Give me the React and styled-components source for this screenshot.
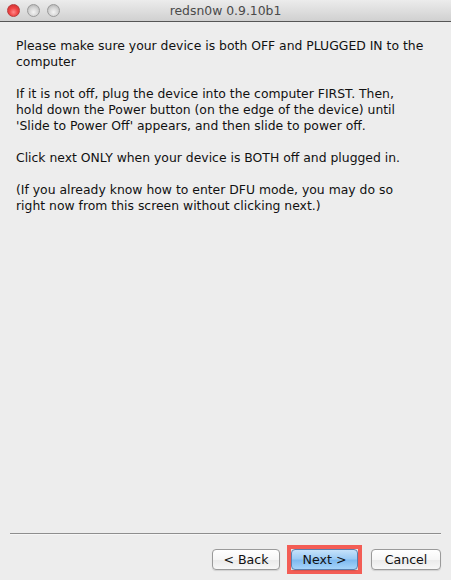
import React from 'react';
import styled, { createGlobalStyle } from 'styled-components';

const GlobalStyle = createGlobalStyle`
  html, body {
    margin: 0;
    padding: 0;
    background: #ededed;
  }
  body {
    font-family: "DejaVu Sans", "Liberation Sans", sans-serif;
  }
`;

const Window = styled.div`
  width: 451px;
  height: 580px;
  display: flex;
  flex-direction: column;
  background: #ededed;
  overflow: hidden;
`;

const TitleBar = styled.div`
  position: relative;
  height: 21px;
  flex-shrink: 0;
  display: flex;
  align-items: center;
  justify-content: center;
  background: linear-gradient(#ececec, #d0d0d0);
  border-bottom: 1px solid #565656;
`;

const Lights = styled.div`
  position: absolute;
  left: 7px;
  top: 4px;
  display: flex;
  gap: 7px;
`;

const Light = styled.span`
  width: 13px;
  height: 13px;
  border-radius: 50%;
  box-sizing: border-box;
  border: 1px solid ${p => (p.red ? '#b83c3c' : '#9a9a9a')};
  background: ${p =>
    p.red
      ? 'radial-gradient(circle at 50% 65%, #ff8a8a 0%, #f04545 45%, #c92b2b 100%)'
      : 'radial-gradient(circle at 50% 65%, #f4f4f4 0%, #d4d4d4 50%, #a9a9a9 100%)'};
`;

const Title = styled.div`
  font-size: 12.4px;
  color: #4a4a4a;
`;

const Content = styled.div`
  flex: 1;
  padding: 16px 16px 0 16px;
  font-size: 12.4px;
  line-height: 16px;
  color: #111;
`;

const Para = styled.p`
  margin: 0 0 16px 0;
  white-space: nowrap;
`;

const Footer = styled.div`
  flex-shrink: 0;
  padding: 0 10px 6px 10px;
`;

const Separator = styled.div`
  height: 1px;
  background: #8e8e8e;
  border-bottom: 1px solid #f6f6f6;
`;

const ButtonRow = styled.div`
  display: flex;
  justify-content: flex-end;
  align-items: center;
  padding-top: 10px;
`;

const Button = styled.button`
  height: 21px;
  width: ${p => p.w}px;
  padding: 0;
  box-sizing: border-box;
  font-family: "DejaVu Sans", "Liberation Sans", sans-serif;
  font-size: 12.6px;
  color: #111;
  border-radius: 4px;
  border: 1px solid ${p => (p.primary ? '#5a7fae' : '#9a9a9a')};
  background: ${p =>
    p.primary
      ? 'linear-gradient(#c6e2fa 0%, #9ccbf4 45%, #7fbaf0 55%, #a6d4fa 100%)'
      : 'linear-gradient(#ffffff 0%, #f6f6f6 50%, #ebebeb 55%, #f7f7f7 100%)'};
  box-shadow: 0 1px 1px rgba(0, 0, 0, 0.12);
`;

const Highlight = styled.div`
  border: 4px solid #f35d55;
  margin: 0 9px 0 7px;
  display: flex;
  padding: 0;
`;

export default function App() {
  return (
    <>
      <GlobalStyle />
      <Window>
        <TitleBar>
          <Lights>
            <Light red />
            <Light />
            <Light />
          </Lights>
          <Title>redsn0w 0.9.10b1</Title>
        </TitleBar>
        <Content>
          <Para>
            Please make sure your device is both OFF and PLUGGED IN to the
            <br />
            computer
          </Para>
          <Para>
            If it is not off, plug the device into the computer FIRST. Then,
            <br />
            hold down the Power button (on the edge of the device) until
            <br />
            'Slide to Power Off' appears, and then slide to power off.
          </Para>
          <Para>Click next ONLY when your device is BOTH off and plugged in.</Para>
          <Para>
            (If you already know how to enter DFU mode, you may do so
            <br />
            right now from this screen without clicking next.)
          </Para>
        </Content>
        <Footer>
          <Separator />
          <ButtonRow>
            <Button w={68}>&lt; Back</Button>
            <Highlight>
              <Button primary w={67}>Next &gt;</Button>
            </Highlight>
            <Button w={70}>Cancel</Button>
          </ButtonRow>
        </Footer>
      </Window>
    </>
  );
}
